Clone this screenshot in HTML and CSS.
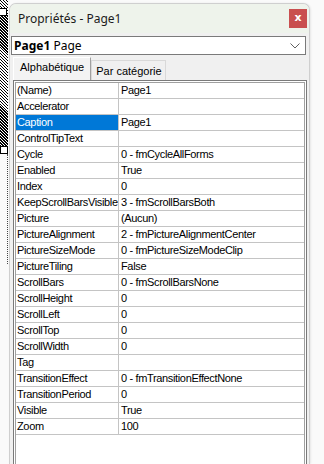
FILE: index.html
```html
<!DOCTYPE html>
<html lang="fr">
<head>
    <meta charset="UTF-8">
    <meta name="viewport" content="width=device-width, initial-scale=1.0">
    <title>Propriétés - Page1</title>
    <link rel="stylesheet" href="styles.css">
</head>
<body>
    <div class="desk">
        <div class="strip">
            <div class="hatch">
                <span class="handle handle-top"></span>
            </div>
            <span class="handle"></span>
            <div class="dots"></div>
        </div>

        <div class="window">
            <div class="titlebar">
                <span class="title">Propriétés - Page1</span>
                <button class="close">x</button>
            </div>

            <div class="panel">
                <div class="combo">
                    <span><b>Page1</b> Page</span>
                    <svg class="chevron" width="10" height="6" viewBox="0 0 10 6">
                        <path d="M0.5 0.5 L5 5 L9.5 0.5" fill="none" stroke="#606060" stroke-width="1"/>
                    </svg>
                </div>

                <div class="tabs">
                    <div class="tab active">Alphabétique</div>
                    <div class="tab">Par catégorie</div>
                </div>

                <div class="grid">
                    <div class="rows" id="rows"></div>
                </div>
            </div>
        </div>
    </div>

    <script>
        const props = [
            ['(Name)', 'Page1'],
            ['Accelerator', ''],
            ['Caption', 'Page1'],
            ['ControlTipText', ''],
            ['Cycle', '0 - fmCycleAllForms'],
            ['Enabled', 'True'],
            ['Index', '0'],
            ['KeepScrollBarsVisible', '3 - fmScrollBarsBoth'],
            ['Picture', '(Aucun)'],
            ['PictureAlignment', '2 - fmPictureAlignmentCenter'],
            ['PictureSizeMode', '0 - fmPictureSizeModeClip'],
            ['PictureTiling', 'False'],
            ['ScrollBars', '0 - fmScrollBarsNone'],
            ['ScrollHeight', '0'],
            ['ScrollLeft', '0'],
            ['ScrollTop', '0'],
            ['ScrollWidth', '0'],
            ['Tag', ''],
            ['TransitionEffect', '0 - fmTransitionEffectNone'],
            ['TransitionPeriod', '0'],
            ['Visible', 'True'],
            ['Zoom', '100']
        ];
        const selected = 'Caption';

        const rows = document.getElementById('rows');
        props.forEach(([name, value]) => {
            const row = document.createElement('div');
            row.className = 'row';

            const n = document.createElement('div');
            n.className = 'name' + (name === selected ? ' selected' : '');
            n.textContent = name;

            const v = document.createElement('div');
            v.className = 'value';
            v.textContent = value;

            row.appendChild(n);
            row.appendChild(v);
            rows.appendChild(row);
        });
    </script>
</body>
</html>
```

FILE: styles.css
```css
html, body {
    margin: 0;
    padding: 0;
}
body {
    width: 324px;
    height: 464px;
    overflow: hidden;
    background: #fafafa;
    font-family: "Liberation Sans", Arial, sans-serif;
}
.desk {
    display: flex;
    height: 464px;
}
.strip {
    width: 9px;
    display: flex;
    flex-direction: column;
    flex-shrink: 0;
}
.hatch {
    position: relative;
    height: 146px;
    width: 8px;
    background: repeating-linear-gradient(45deg, #000 0 1px, #fff 1px 2.1px);
}
.handle {
    display: block;
    width: 6px;
    height: 6px;
    border: 1px solid #000;
    background: #fff;
    box-sizing: content-box;
}
.handle-top {
    position: absolute;
    left: -1px;
    top: 8px;
}
.dots {
    width: 7px;
    height: 110px;
    border-right: 1px dotted #444;
}
.window {
    width: 299px;
    margin-top: 3px;
    border: 1px solid #cfcfcf;
    border-bottom: none;
    border-radius: 7px 7px 0 0;
    background: #f0f0f0;
    display: flex;
    flex-direction: column;
    overflow: hidden;
    box-shadow: 1px 0 2px rgba(0,0,0,0.08);
}
.titlebar {
    height: 29px;
    background: #eef3eb;
    display: flex;
    align-items: center;
    justify-content: space-between;
    padding: 0 2px 0 8px;
}
.title {
    font-family: "Noto Sans", sans-serif;
    font-size: 12px;
    color: #1b1b1b;
}
.close {
    width: 18px;
    height: 19px;
    border: none;
    padding: 0 0 2px 0;
    background: #c94f4f;
    color: #fff;
    font-family: "DejaVu Sans", sans-serif;
    font-weight: bold;
    font-size: 11px;
    line-height: 17px;
}
.panel {
    display: flex;
    flex-direction: column;
    padding: 3px 0 0 1px;
    flex: 1;
}
.combo {
    height: 17px;
    border: 1px solid #7a7a7a;
    background: #fff;
    display: flex;
    align-items: center;
    justify-content: space-between;
    padding: 0 5px 0 2px;
    box-sizing: content-box;
    width: 286px;
    font-family: "Noto Sans", sans-serif;
    font-size: 12px;
    color: #000;
}
.combo b {
    font-weight: bold;
}
.tabs {
    display: flex;
    align-items: flex-end;
    height: 23px;
    margin-top: 2px;
    padding-left: 2px;
}
.tab {
    font-size: 11px;
    color: #000;
    height: 19px;
    padding: 0 3px 0 4px;
    line-height: 20px;
    border: 1px solid #d9d9d9;
    border-bottom: none;
    background: #f0f0f0;
}
.tab.active {
    height: 22px;
    line-height: 19px;
    padding: 0 6px;
    border-color: #fff #a0a0a0 #fff #fff;
    background: #f3f3f3;
}
.grid {
    margin-left: 2px;
    width: 290px;
    flex: 1;
    border: 1px solid #7a7a7a;
    border-bottom: none;
    padding: 1px 1px 0 1px;
    background: #fff;
}
.rows {
    border: 1px solid #a0a0a0;
    border-bottom: none;
    height: 100%;
    font-size: 11px;
    letter-spacing: -0.35px;
    color: #000;
}
.row {
    display: grid;
    grid-template-columns: 103px 1fr;
    height: 15px;
    border-bottom: 1px solid #c4c4c4;
}
.name {
    border-right: 1px solid #c4c4c4;
    padding-left: 1px;
    line-height: 15px;
    white-space: nowrap;
    overflow: hidden;
}
.name.selected {
    background: #0078d7;
    color: #fff;
}
.value {
    padding-left: 2px;
    line-height: 15px;
    white-space: nowrap;
}
```
